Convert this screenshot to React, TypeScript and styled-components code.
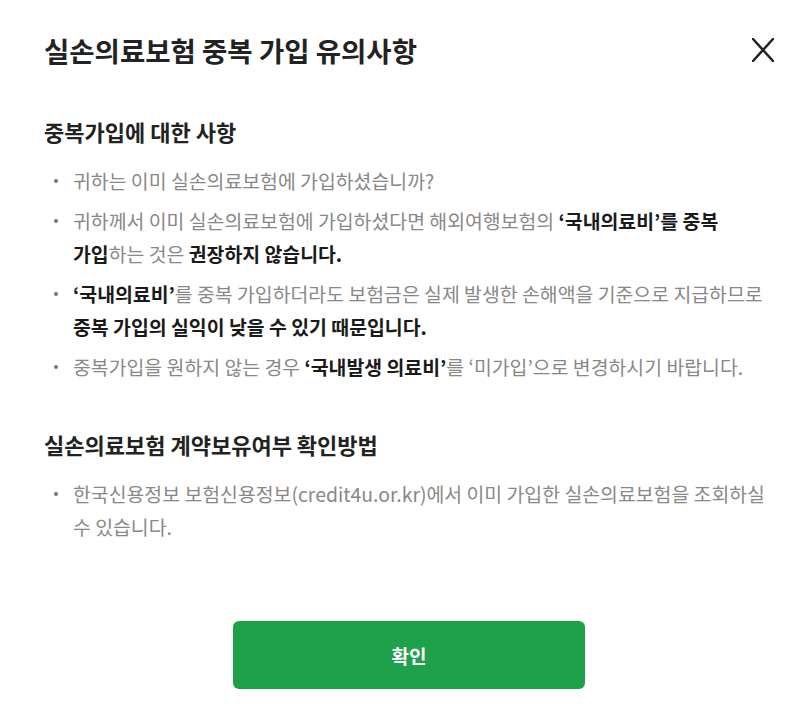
import styled, { createGlobalStyle } from "styled-components";

const GlobalStyle = createGlobalStyle`
  html, body {
    margin: 0;
    padding: 0;
    background: #ffffff;
  }
  body {
    font-family: "Noto Sans CJK KR", "Noto Sans", sans-serif;
    -webkit-font-smoothing: antialiased;
  }
`;

const Modal = styled.div`
  width: 800px;
  min-height: 727px;
  box-sizing: border-box;
  padding: 30px 26px 0 44px;
  display: flex;
  flex-direction: column;
`;

const Header = styled.header`
  display: flex;
  justify-content: space-between;
  align-items: center;
  height: 40px;
`;

const Title = styled.h1`
  margin: 0;
  font-size: 27.5px;
  line-height: 40px;
  font-weight: 700;
  color: #222;
`;

const CloseButton = styled.button`
  border: 0;
  background: none;
  padding: 0;
  width: 22px;
  height: 24px;
  display: flex;
  align-items: center;
  justify-content: center;
  cursor: pointer;
`;

const Section = styled.section<{ $top: number }>`
  margin-top: ${(p) => p.$top}px;
`;

const SectionTitle = styled.h2`
  margin: 0;
  font-size: 22px;
  line-height: 30px;
  font-weight: 700;
  color: #222;
`;

const List = styled.ul`
  list-style: none;
  margin: 18px 0 0;
  padding: 0;
  display: flex;
  flex-direction: column;
  gap: 7px;
`;

const Item = styled.li`
  position: relative;
  padding-left: 29px;
  font-size: 19.4px;
  line-height: 33px;
  color: #888;
  word-break: keep-all;

  &::before {
    content: "";
    position: absolute;
    left: 10px;
    top: 15px;
    width: 4px;
    height: 4px;
    border-radius: 50%;
    background: #777;
  }
`;

const Strong = styled.b`
  font-weight: 700;
  color: #1a1a1a;
`;

const Footer = styled.div`
  display: flex;
  justify-content: center;
  margin-top: 78px;
`;

const ConfirmButton = styled.button`
  width: 352px;
  height: 68px;
  border: 0;
  border-radius: 6px;
  background: #1fa04a;
  color: #fff;
  font-family: "Noto Sans CJK KR", "Noto Sans", sans-serif;
  font-size: 19px;
  font-weight: 700;
  cursor: pointer;
`;

function CloseIcon() {
  return (
    <svg width="22" height="24" viewBox="0 0 22 24" fill="none">
      <path d="M1 1L21 23M21 1L1 23" stroke="#222" strokeWidth="2.5" strokeLinecap="round" />
    </svg>
  );
}

export default function App() {
  return (
    <>
      <GlobalStyle />
      <Modal>
        <Header>
          <Title>실손의료보험 중복 가입 유의사항</Title>
          <CloseButton aria-label="닫기">
            <CloseIcon />
          </CloseButton>
        </Header>

        <Section $top={46}>
          <SectionTitle>중복가입에 대한 사항</SectionTitle>
          <List>
            <Item>귀하는 이미 실손의료보험에 가입하셨습니까?</Item>
            <Item>
              귀하께서 이미 실손의료보험에 가입하셨다면 해외여행보험의 <Strong>‘국내의료비’를 중복 가입</Strong>하는 것은{" "}
              <Strong>권장하지 않습니다.</Strong>
            </Item>
            <Item>
              <Strong>‘국내의료비’</Strong>를 중복 가입하더라도 보험금은 실제 발생한 손해액을 기준으로 지급하므로{" "}
              <Strong>중복 가입의 실익이 낮을 수 있기 때문입니다.</Strong>
            </Item>
            <Item>
              중복가입을 원하지 않는 경우 <Strong>‘국내발생 의료비’</Strong>를 ‘미가입’으로 변경하시기 바랍니다.
            </Item>
          </List>
        </Section>

        <Section $top={46}>
          <SectionTitle>실손의료보험 계약보유여부 확인방법</SectionTitle>
          <List>
            <Item>한국신용정보 보험신용정보(credit4u.or.kr)에서 이미 가입한 실손의료보험을 조회하실 수 있습니다.</Item>
          </List>
        </Section>

        <Footer>
          <ConfirmButton>확인</ConfirmButton>
        </Footer>
      </Modal>
    </>
  );
}
